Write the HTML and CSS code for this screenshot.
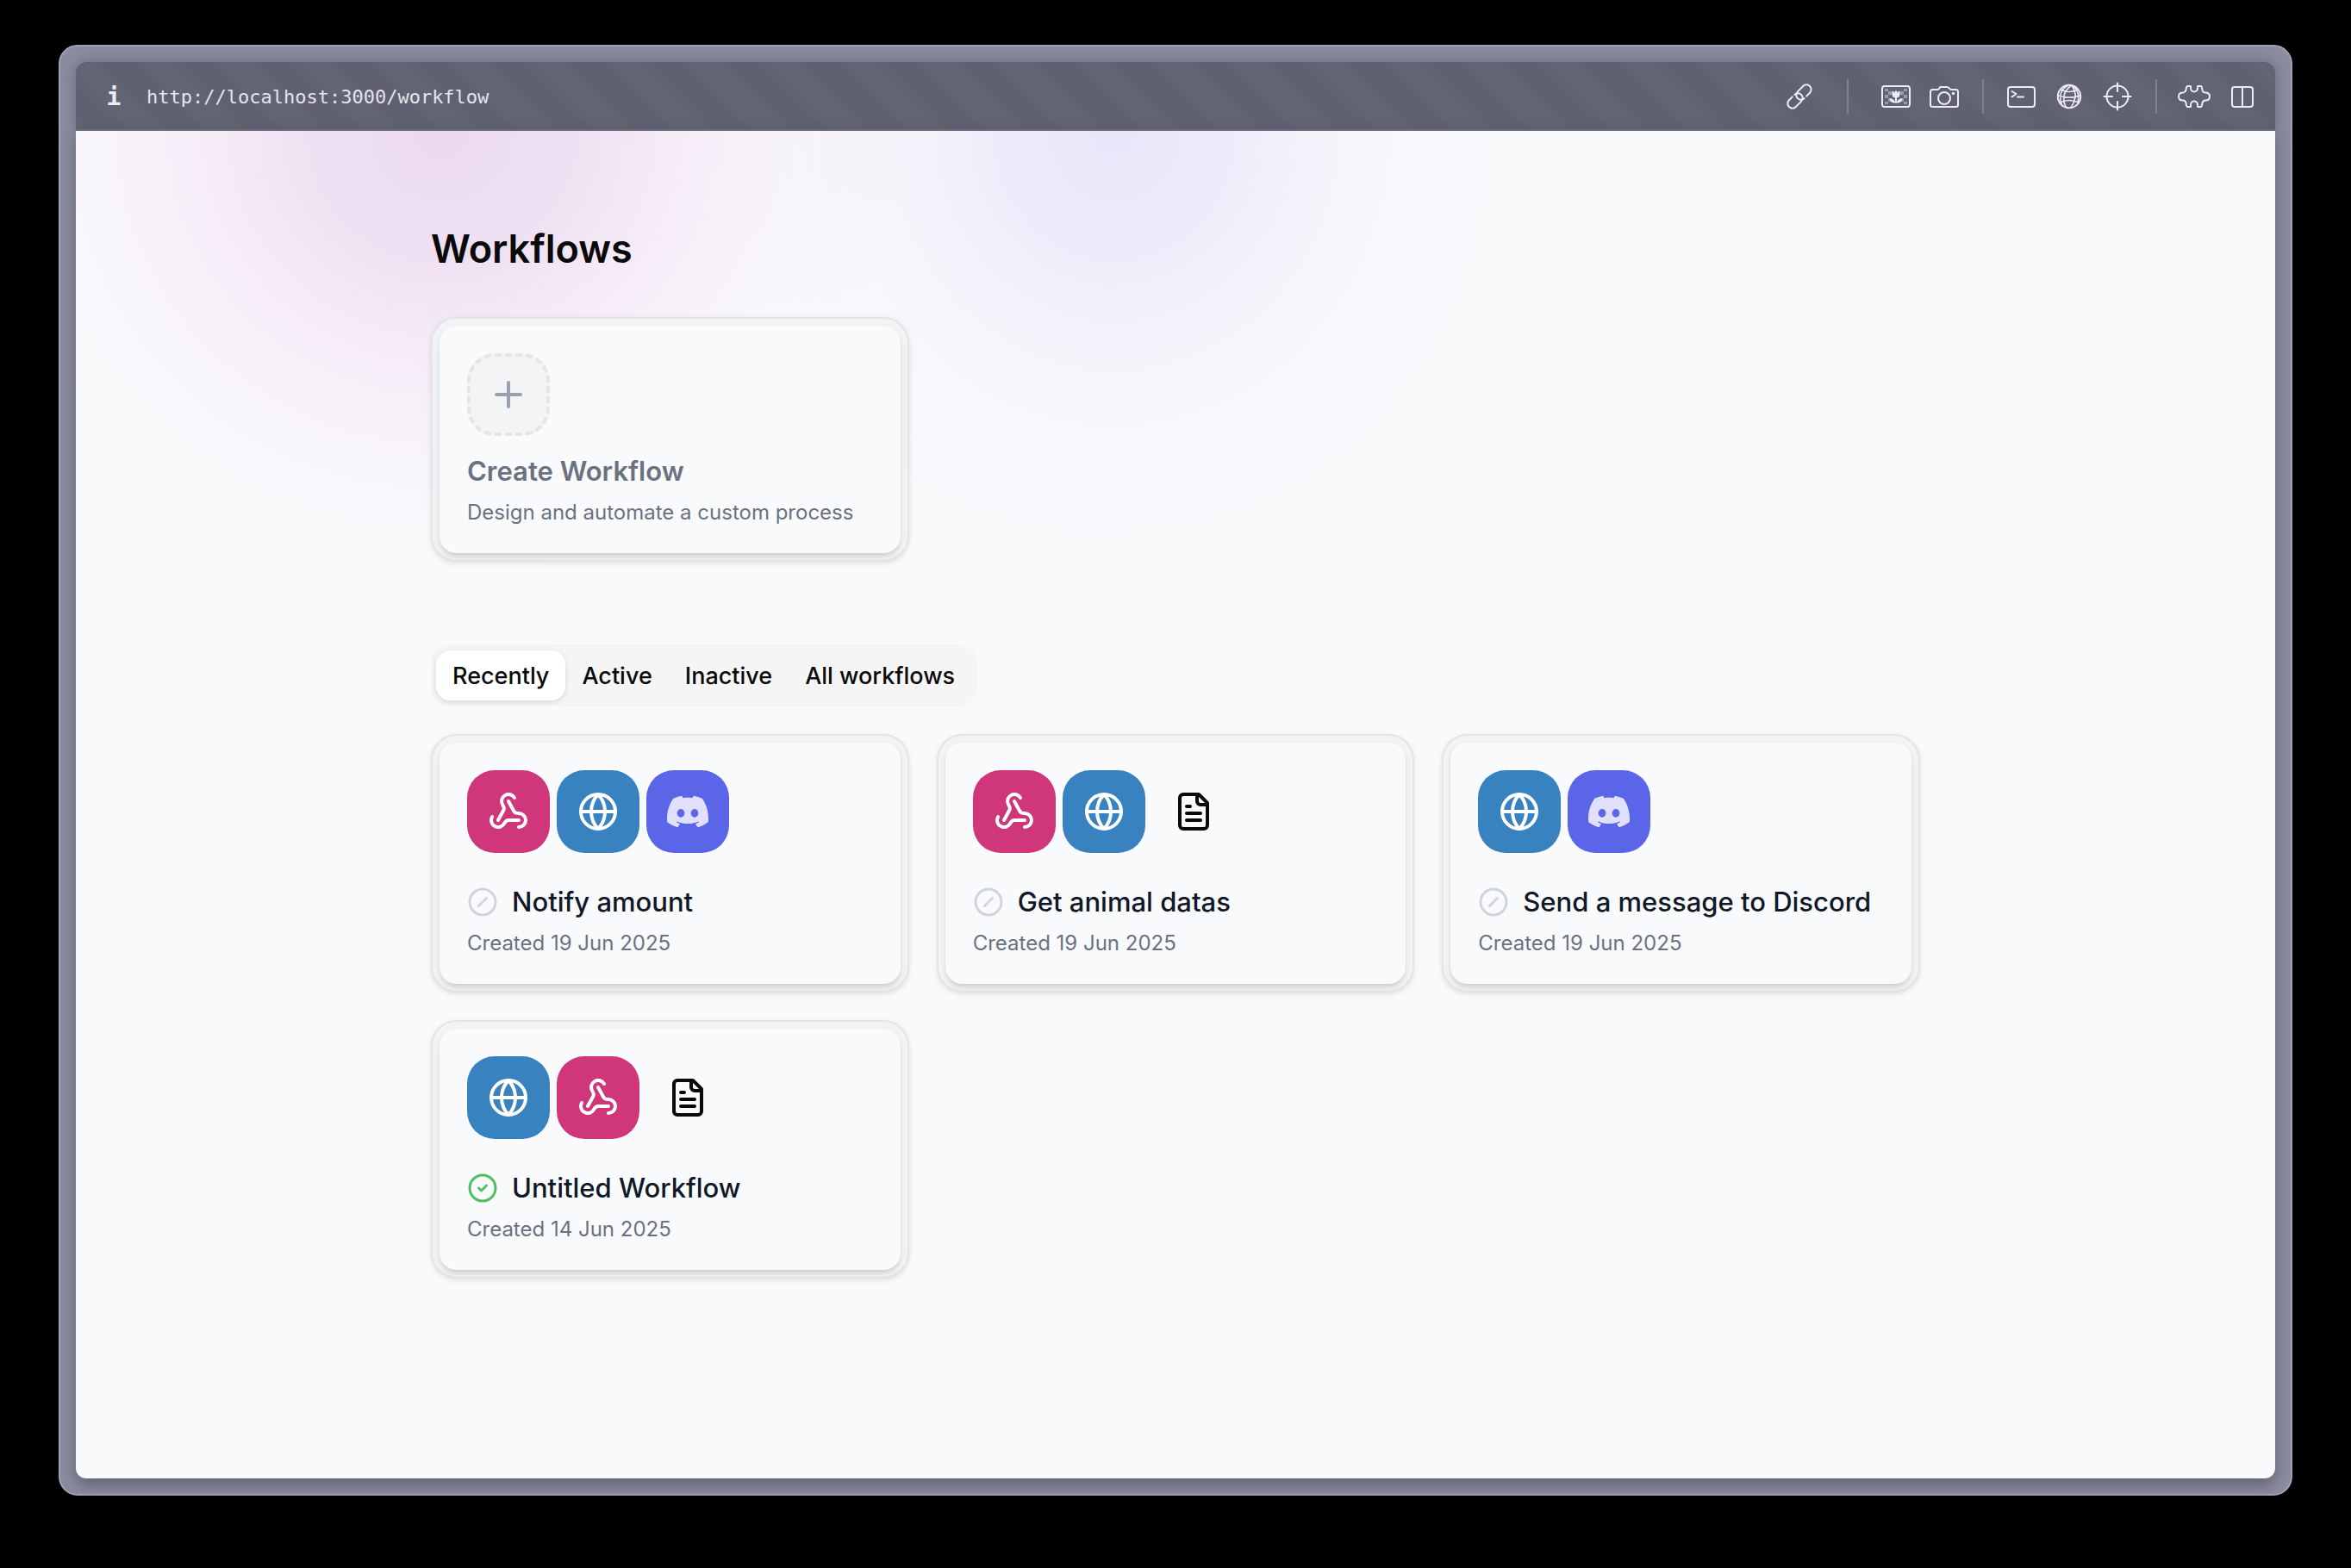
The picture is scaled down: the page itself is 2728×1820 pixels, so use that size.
FILE: index.html
```html
<!DOCTYPE html>
<html lang="en">
<head>
<meta charset="utf-8">
<meta name="viewport" content="width=device-width, initial-scale=1">
<title>Workflows</title>
<link rel="stylesheet" href="styles.css">
</head>
<body>
<svg class="sprite" aria-hidden="true">
  <symbol id="webhook" viewBox="0 0 24 24"><path d="M18 16.98h-5.99c-1.1 0-1.95.94-2.48 1.9A4 4 0 0 1 2 17c.01-.7.2-1.4.57-2"/><path d="m6 17 3.13-5.78c.53-.97.1-2.18-.5-3.1a4 4 0 1 1 6.89-4.06"/><path d="m12 6 3.13 5.73C15.66 12.7 16.9 13 18 13a4 4 0 0 1 0 8"/></symbol>
  <symbol id="globe" viewBox="0 0 24 24"><circle cx="12" cy="12" r="10"/><path d="M12 2a14.5 14.5 0 0 0 0 20 14.5 14.5 0 0 0 0-20"/><path d="M2 12h20"/></symbol>
  <symbol id="file" viewBox="0 0 24 24"><path d="M15 2H6a2 2 0 0 0-2 2v16a2 2 0 0 0 2 2h12a2 2 0 0 0 2-2V7Z"/><path d="M14 2v4a2 2 0 0 0 2 2h4"/><path d="M10 9H8"/><path d="M16 13H8"/><path d="M16 17H8"/></symbol>
  <symbol id="discord" viewBox="0 0 24 24"><path fill="currentColor" stroke="none" d="M20.317 4.3698a19.7913 19.7913 0 0 0-4.8851-1.5152.0741.0741 0 0 0-.0785.0371c-.211.3753-.4447.8648-.6083 1.2495-1.8447-.2762-3.68-.2762-5.4868 0-.1636-.3933-.4058-.8742-.6177-1.2495a.077.077 0 0 0-.0785-.037 19.7363 19.7363 0 0 0-4.8852 1.515.0699.0699 0 0 0-.0321.0277C.5334 9.0458-.319 13.5799.0992 18.0578a.0824.0824 0 0 0 .0312.0561c2.0528 1.5076 4.0413 2.4228 5.9929 3.0294a.0777.0777 0 0 0 .0842-.0276c.4616-.6304.8731-1.2952 1.226-1.9942a.076.076 0 0 0-.0416-.1057c-.6528-.2476-1.2743-.5495-1.8722-.8923a.077.077 0 0 1-.0076-.1277c.1258-.0943.2517-.1923.3718-.2914a.0743.0743 0 0 1 .0776-.0105c3.9278 1.7933 8.18 1.7933 12.0614 0a.0739.0739 0 0 1 .0785.0095c.1202.099.246.1981.3728.2924a.077.077 0 0 1-.0066.1276 12.2986 12.2986 0 0 1-1.873.8914.0766.0766 0 0 0-.0407.1067c.3604.698.7719 1.3628 1.225 1.9932a.076.076 0 0 0 .0842.0286c1.961-.6067 3.9495-1.5219 6.0023-3.0294a.077.077 0 0 0 .0313-.0552c.5004-5.177-.8382-9.6739-3.5485-13.6604a.061.061 0 0 0-.0312-.0286zM8.02 15.3312c-1.1825 0-2.1569-1.0857-2.1569-2.419 0-1.3332.9555-2.4189 2.157-2.4189 1.2108 0 2.1757 1.0952 2.1568 2.419 0 1.3332-.9555 2.4189-2.1569 2.4189zm7.9748 0c-1.1825 0-2.1569-1.0857-2.1569-2.419 0-1.3332.9554-2.4189 2.1569-2.4189 1.2108 0 2.1757 1.0952 2.1568 2.419 0 1.3332-.946 2.4189-2.1568 2.4189Z"/></symbol>
  <symbol id="inactive" viewBox="0 0 24 24"><circle cx="12" cy="12" r="10"/><path d="m9 15 6-6"/></symbol>
  <symbol id="active" viewBox="0 0 24 24"><circle cx="12" cy="12" r="10"/><path d="m9 12 2 2 4-4"/></symbol>
</svg>

<div class="window">
  <header class="bar">
    <button class="info" type="button" aria-label="Site information">i</button>
    <input class="url" type="text" aria-label="Address" value="http://localhost:3000/workflow" spellcheck="false">
    <button class="tool" type="button" aria-label="Copy link">
      <svg viewBox="-20 -20 40 40"><g transform="rotate(-45)"><path d="M-6-5.500h-5.500a5.500 5.500 0 0 0 0 11h9a5.500 5.500 0 0 0 0-11"/><path d="M6 5.500h5.500a5.500 5.500 0 0 0 0-11h-9a5.500 5.500 0 0 0 0 11"/></g></svg>
    </button>
    <span class="divider divider-wide"></span>
    <div class="tools">
      <button class="tool" type="button" aria-label="Transparent screenshot">
        <svg viewBox="0 0 40 40"><g class="solid dim"><path d="M7 11h4v3H7zM7 18h4v4H7zM11 14h4v4h-4zM11 22h4v4h-4zM7 26h4v3H7zM29 11h4v3h-4zM29 18h4v4h-4zM25 14h4v4h-4zM25 22h4v4h-4zM29 26h4v3h-4z"/></g><rect x="4" y="8" width="32" height="24" rx="3"/><path class="solid" d="M15.500 13.500q2 .5 2.800 2l1.700-3 1.700 3q.8-1.500 2.800-2v4q0 3.500-3.500 4v4.500q2-3.500 6.500-3.800-.5 5-5.500 5.300h-4q-5-.3-5.500-5.300 4.500.3 6.500 3.800v-4.500q-3.500-.5-3.500-4z"/></svg>
      </button>
      <button class="tool" type="button" aria-label="Screenshot">
        <svg viewBox="0 0 40 40"><path d="M6.500 12h5.500q1.500 0 2.500-1.800T17 9h6q1.500 0 2.500 1.200T28 12h5.500q2.500 0 2.500 2.500v15q0 2.500-2.500 2.500h-27Q4 32 4 29.500v-15Q4 12 6.500 12z"/><circle cx="20" cy="22" r="7"/><circle class="solid" cx="30.500" cy="16.500" r="1.800"/></svg>
      </button>
    </div>
    <span class="divider"></span>
    <div class="tools">
      <button class="tool" type="button" aria-label="Console">
        <svg viewBox="0 0 40 40"><rect x="5" y="9" width="31" height="23" rx="3"/><path d="m9.500 14 5 3-5 3.500M16 20.500h7"/></svg>
      </button>
      <button class="tool" type="button" aria-label="Network">
        <svg viewBox="0 0 40 40"><circle cx="20" cy="20" r="13.200"/><g class="fine"><path d="M23 7q-8 5-9 13t3 13M19 7q-8 4-9 11t2 13M23 7q5 8 4 14t-5 12M25 8q8 7 5 19M10 12q10 5 20 0M7 19q13 4 26 0M9 27q11-5 22 0"/></g></svg>
      </button>
      <button class="tool" type="button" aria-label="Inspect element">
        <svg viewBox="0 0 40 40"><circle cx="20" cy="20" r="12.500"/><path d="M20 4.500v9.500M20 26v9.500M4.500 20H14M26 20h9.500"/></svg>
      </button>
    </div>
    <span class="divider"></span>
    <div class="tools">
      <button class="tool" type="button" aria-label="Extensions">
        <svg viewBox="0 0 40 40"><path d="M16 8h-3.500Q11 8 10.700 11.500T7 15.500q-5 0-5 4.500t5 4.500q3.300 0 3.700 4T12.500 32H16v-2.500a4 4 0 0 1 8 0V32h3.500q1.500 0 1.800-3.500t3.700-4q5 0 5-4.500t-5-4.500q-3.300 0-3.700-4T27.500 8H24v2.500a4 4 0 0 1-8 0z"/></svg>
      </button>
      <button class="tool" type="button" aria-label="Toggle panel">
        <svg viewBox="0 0 40 40"><rect x="8" y="9" width="24" height="23" rx="3"/><path d="M20 9v23"/></svg>
      </button>
    </div>
  </header>

  <main class="page">
    <div class="content">
      <h1>Workflows</h1>

      <section class="grid">
        <button class="card" type="button">
          <span class="card-body">
            <span class="tile tile-add"><svg viewBox="0 0 24 24"><path d="M5 12h14M12 5v14"/></svg></span>
            <span class="create-title">Create Workflow</span>
            <span class="meta">Design and automate a custom process</span>
          </span>
        </button>
      </section>

      <div class="tabs" role="tablist" aria-label="Filter workflows">
        <button class="tab" type="button" role="tab" aria-selected="true">Recently</button>
        <button class="tab" type="button" role="tab" aria-selected="false">Active</button>
        <button class="tab" type="button" role="tab" aria-selected="false">Inactive</button>
        <button class="tab" type="button" role="tab" aria-selected="false">All workflows</button>
      </div>

      <section class="grid">
        <a class="card" href="#notify-amount">
          <span class="card-body">
            <span class="tiles">
              <span class="tile tile-webhook"><svg><use href="#webhook"/></svg></span>
              <span class="tile tile-http"><svg><use href="#globe"/></svg></span>
              <span class="tile tile-discord"><svg><use href="#discord"/></svg></span>
            </span>
            <span class="name"><svg class="status"><use href="#inactive"/></svg>Notify amount</span>
            <span class="meta">Created 19 Jun 2025</span>
          </span>
        </a>
        <a class="card" href="#get-animal-datas">
          <span class="card-body">
            <span class="tiles">
              <span class="tile tile-webhook"><svg><use href="#webhook"/></svg></span>
              <span class="tile tile-http"><svg><use href="#globe"/></svg></span>
              <span class="tile tile-file"><svg><use href="#file"/></svg></span>
            </span>
            <span class="name"><svg class="status"><use href="#inactive"/></svg>Get animal datas</span>
            <span class="meta">Created 19 Jun 2025</span>
          </span>
        </a>
        <a class="card" href="#send-a-message">
          <span class="card-body">
            <span class="tiles">
              <span class="tile tile-http"><svg><use href="#globe"/></svg></span>
              <span class="tile tile-discord"><svg><use href="#discord"/></svg></span>
            </span>
            <span class="name"><svg class="status"><use href="#inactive"/></svg>Send a message to Discord</span>
            <span class="meta">Created 19 Jun 2025</span>
          </span>
        </a>
        <a class="card" href="#untitled-workflow">
          <span class="card-body">
            <span class="tiles">
              <span class="tile tile-http"><svg><use href="#globe"/></svg></span>
              <span class="tile tile-webhook"><svg><use href="#webhook"/></svg></span>
              <span class="tile tile-file"><svg><use href="#file"/></svg></span>
            </span>
            <span class="name"><svg class="status status-on"><use href="#active"/></svg>Untitled Workflow</span>
            <span class="meta">Created 14 Jun 2025</span>
          </span>
        </a>
      </section>
    </div>
  </main>
</div>
</body>
</html>
```

FILE: styles.css
```css
*, *::before, *::after { box-sizing: border-box; }

body {
  margin: 0;
  min-height: 100vh;
  padding: 52px 68px 84px;
  display: flex;
  background: #000;
  color: #0a0a0a;
  font-family: Inter, "Liberation Sans", sans-serif;
}

button, input { font: inherit; color: inherit; border: 0; padding: 0; margin: 0; background: none; }
button { cursor: pointer; }
a { color: inherit; text-decoration: none; }

svg {
  display: block;
  fill: none;
  stroke: currentColor;
  stroke-width: 2;
  stroke-linecap: round;
  stroke-linejoin: round;
}

.sprite { position: absolute; width: 0; height: 0; }

/* Browser window */
.window {
  flex: 1;
  min-width: 0;
  display: flex;
  flex-direction: column;
  padding: 18px;
  border: 2px solid #a2a2b3;
  border-radius: 22px;
  background: #8c8ca1;
}

.bar {
  display: flex;
  align-items: center;
  height: 80px;
  padding: 0 18px 0 20px;
  border-radius: 12px 12px 0 0;
  background: repeating-linear-gradient(45deg, #636473 0 11px, #5f6070 11px 43px, #636473 43px 64px);
  box-shadow: inset 0 -2px #74747f, 0 0 18px rgba(0, 0, 0, .25);
  color: #ececf4;
}

.info {
  width: 48px;
  margin-right: 14px;
  padding-top: 2px;
  font-family: "DejaVu Sans Mono", monospace;
  font-size: 28px;
  font-weight: 700;
  line-height: 32px;
}

.url {
  flex: 1;
  min-width: 0;
  padding-top: 2px;
  color: #e4e4ec;
  font-family: "DejaVu Sans Mono", monospace;
  font-size: 22px;
  line-height: 32px;
}

.tools { display: flex; gap: 16px; }
.tool { width: 40px; height: 40px; flex: none; }
.tool svg { width: 40px; height: 40px; }
.tool .solid { fill: currentColor; stroke: none; }
.tool .fine { stroke-width: 1.600; }
.tool .dim { opacity: .4; }

.divider { flex: none; width: 2px; height: 40px; margin: 0 23px 0 24px; background: #808090; }
.divider-wide { margin: 0 35px; }

/* Page */
.page {
  flex: 1;
  padding: 104px 48px;
  border-radius: 0 0 12px 12px;
  box-shadow: 0 8px 18px rgba(0, 0, 0, .3);
  background:
    radial-gradient(ellipse 540px 520px at 425px 0, rgba(208, 156, 214, .34) 0%, rgba(214, 160, 218, .29) 28%, rgba(228, 165, 224, .17) 50%, rgba(225, 170, 215, .06) 75%, transparent 100%),
    radial-gradient(ellipse 450px 480px at 1205px 0, rgba(190, 175, 240, .28) 0%, rgba(190, 175, 240, .21) 25%, rgba(190, 175, 240, .09) 52%, rgba(190, 175, 240, .03) 78%, transparent 100%),
    #f9fafc;
}

.content { max-width: 1728px; margin: 0 auto; }

h1 { margin: 0 0 46px; font-size: 45px; line-height: 66px; font-weight: 600; }

.grid { display: grid; grid-template-columns: repeat(3, minmax(0, 1fr)); gap: 32px; }

.card {
  display: block;
  padding: 8px;
  border: 2px solid #e4e5e6;
  border-radius: 30px;
  background: #f2f3f4;
  box-shadow: 0 2px 6px rgba(0, 0, 0, .1);
  text-align: left;
}

.card-body {
  display: flex;
  flex-direction: column;
  padding: 32px 32px 31px;
  border-radius: 20px;
  background: #f9fafc;
  box-shadow: 0 6px 8px -2px rgba(0, 0, 0, .12), 0 2px 6px -2px rgba(0, 0, 0, .1);
}

.tiles { display: flex; gap: 8px; margin-bottom: 33px; }

.tile {
  display: grid;
  place-items: center;
  width: 96px;
  height: 96px;
  border-radius: 32px;
  color: #fff;
}
.tile svg { width: 48px; height: 48px; }
.tile-webhook { background: #cf377a; }
.tile-http { background: #3982c0; }
.tile-discord { background: #5b65e8; color: #e0e0fc; }
.tile-file { color: #0a0a0a; }
.tile-add {
  margin-bottom: 17px;
  border: 4px dashed #e4e5e6;
  background: #f3f4f5;
  color: #99a1af;
}

.create-title { font-size: 31px; line-height: 48px; font-weight: 600; color: #6a7282; margin-bottom: 8px; }

.name {
  display: flex;
  align-items: center;
  gap: 16px;
  margin-bottom: 8px;
  font-size: 31px;
  line-height: 48px;
  font-weight: 500;
  color: #101828;
  white-space: nowrap;
}

.status { flex: none; width: 36px; height: 36px; color: #d1d5db; }
.status-on { color: #4fbf62; }

.meta { font-size: 24px; line-height: 32px; color: #6a7282; }

/* Tabs */
.tabs {
  display: inline-flex;
  align-items: center;
  height: 72px;
  margin: 96px 0 32px;
  padding: 6px;
  border-radius: 20px;
  background: #f5f5f5;
  vertical-align: top;
}

.tab {
  height: 58px;
  padding: 2px 19px 0;
  border-radius: 16px;
  font-size: 27px;
  line-height: 40px;
  font-weight: 500;
}
.tab[aria-selected="true"] { background: #fff; box-shadow: 0 2px 6px rgba(0, 0, 0, .12); }
```
